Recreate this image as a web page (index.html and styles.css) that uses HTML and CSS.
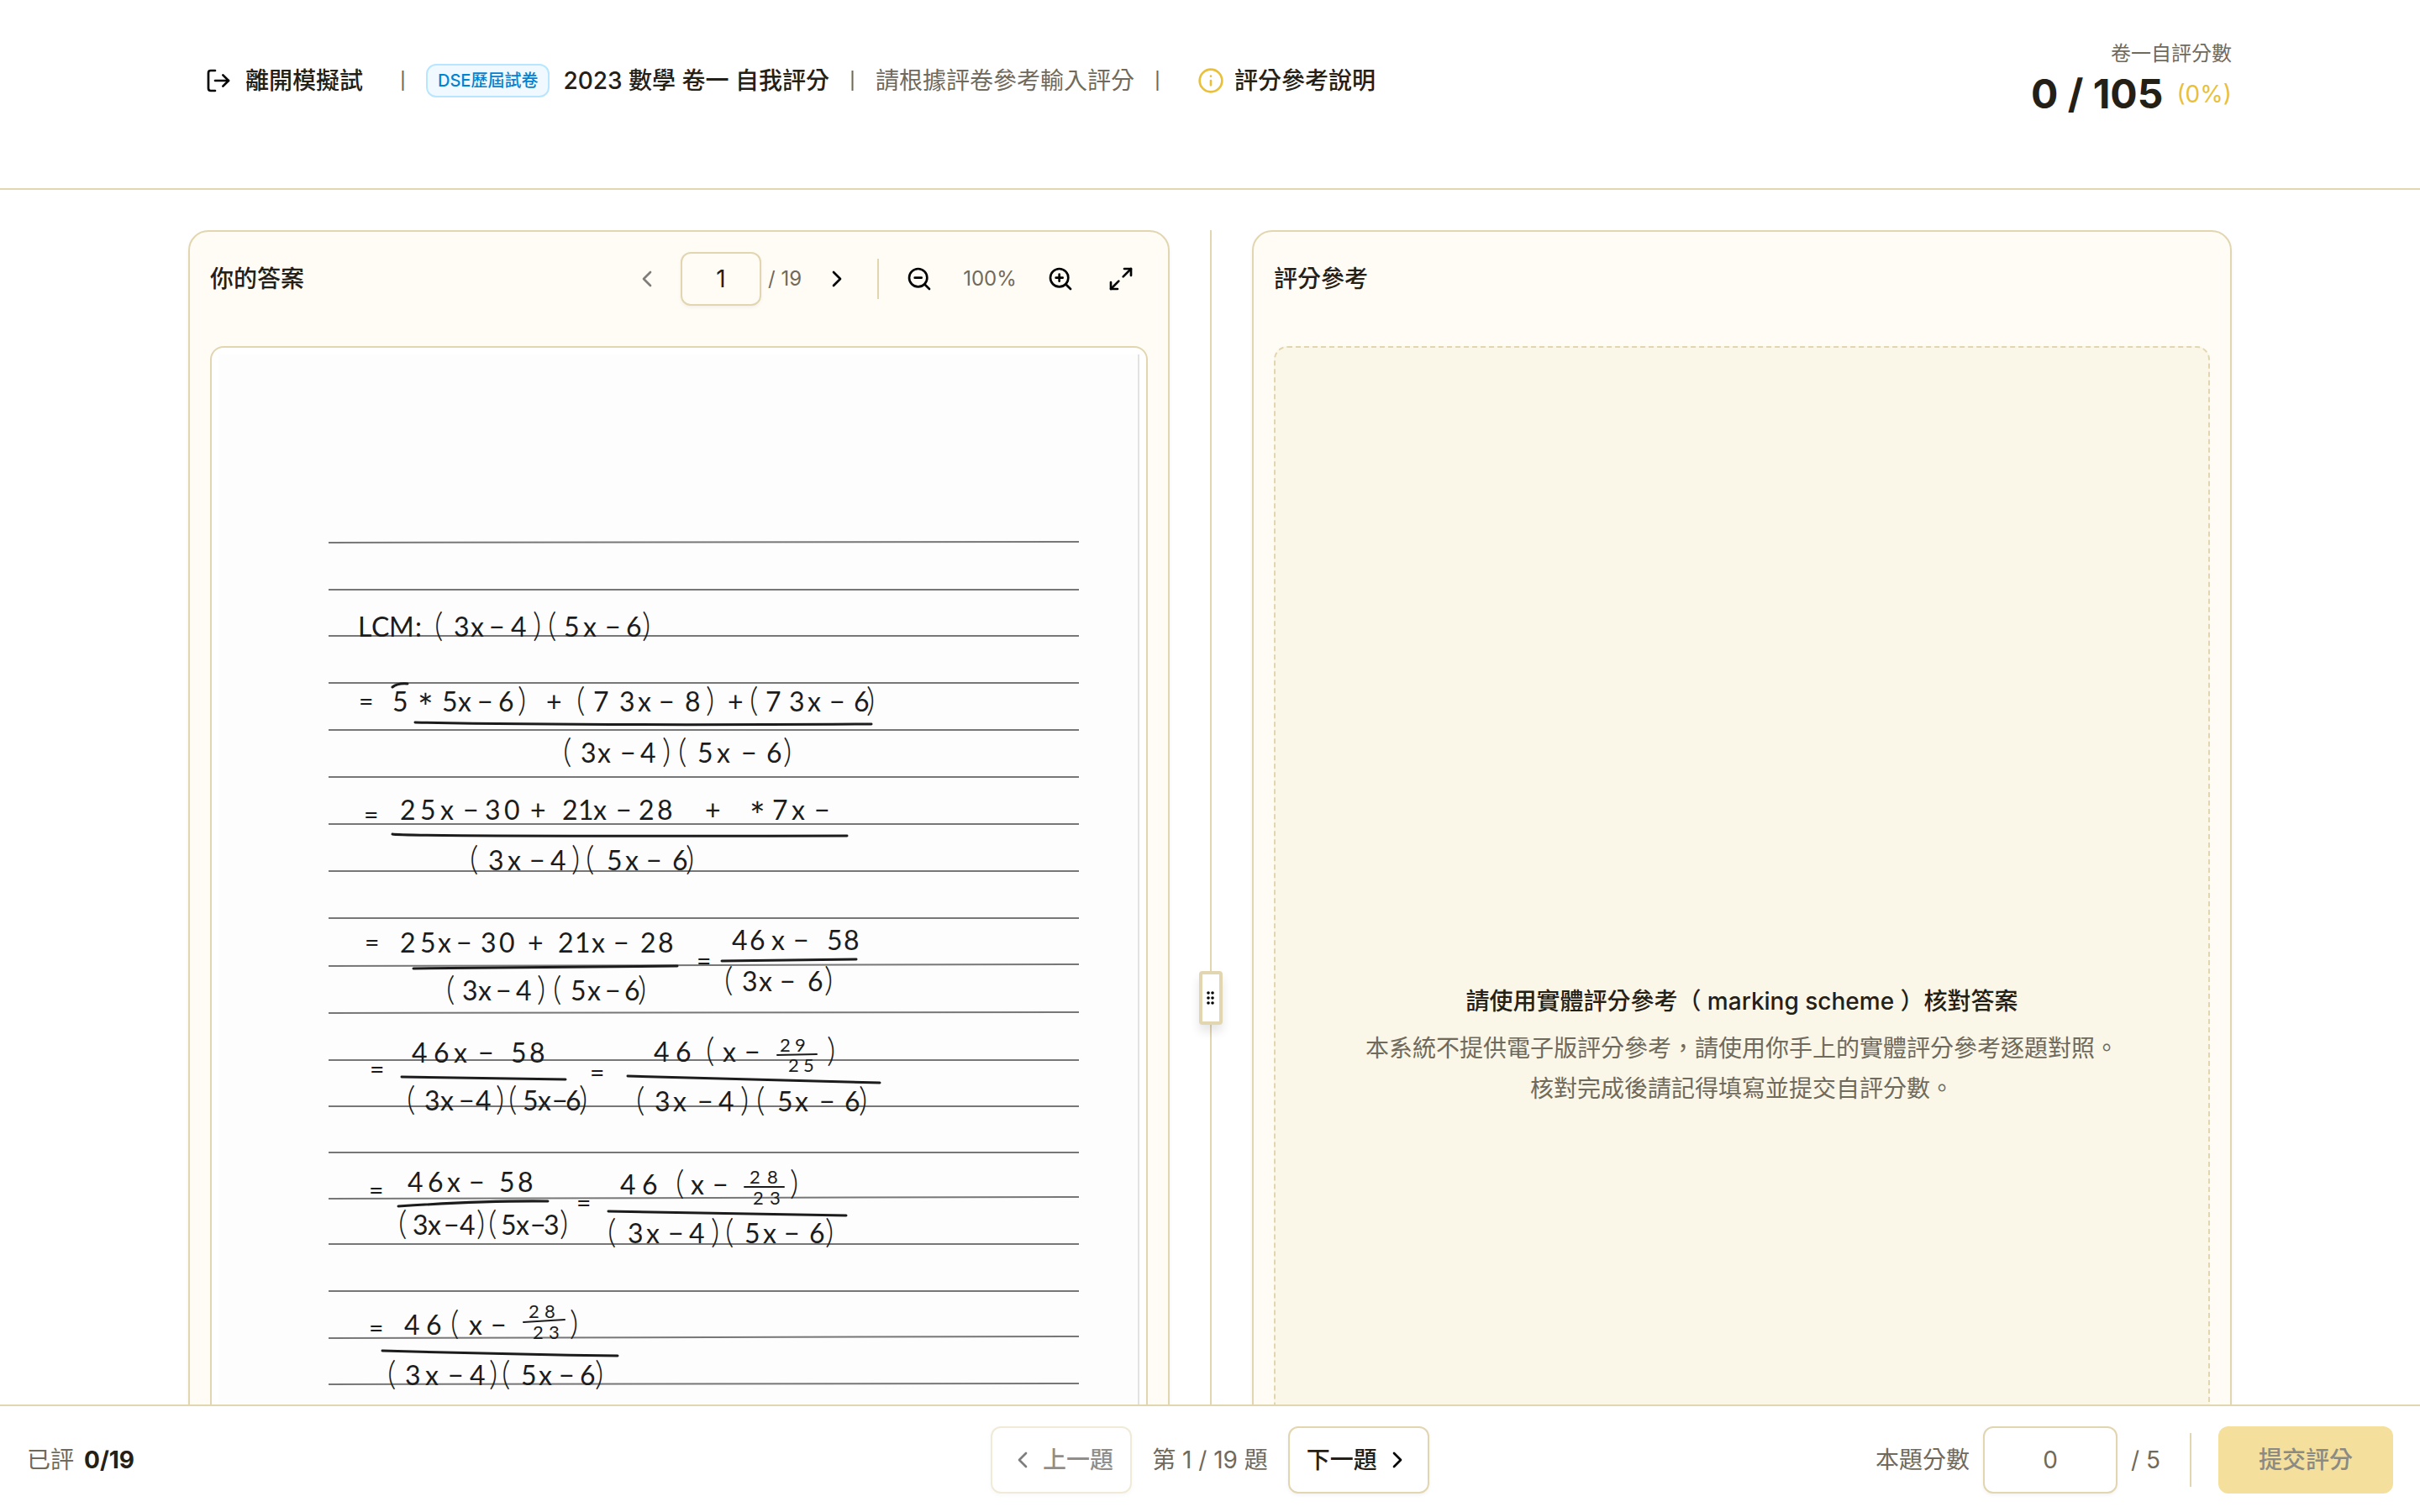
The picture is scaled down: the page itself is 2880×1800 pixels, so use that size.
FILE: index.html
```html
<!DOCTYPE html>
<html lang="zh-Hant">
<head>
<meta charset="utf-8">
<meta name="viewport" content="width=device-width, initial-scale=1">
<title>2023 數學 卷一 自我評分</title>
<link rel="stylesheet" href="styles.css">
</head>
<body>
<div class="app">
  <header class="topbar">
    <div class="topbar-inner">
      <nav class="crumbs">
        <button type="button" class="text-button">
          <svg class="icon" viewBox="0 0 24 24" aria-hidden="true"><path d="m16 17 5-5-5-5"/><path d="M21 12H9"/><path d="M9 21H5a2 2 0 0 1-2-2V5a2 2 0 0 1 2-2h4"/></svg>
          離開模擬試
        </button>
        <span class="bar">|</span>
        <div class="paper-title">
          <span class="badge">DSE歷屆試卷</span>
          <h1>2023 數學 卷一 自我評分</h1>
        </div>
        <span class="bar">|</span>
        <span class="hint">請根據評卷參考輸入評分</span>
        <span class="bar">|</span>
        <button type="button" class="text-button info">
          <svg class="icon icon-gold" viewBox="0 0 24 24" aria-hidden="true"><circle cx="12" cy="12" r="10"/><path d="M12 16v-4"/><path d="M12 8h.01"/></svg>
          評分參考說明
        </button>
      </nav>
      <div class="score">
        <div class="score-label">卷一自評分數</div>
        <div class="score-row"><strong>0 / 105</strong><span class="percent">(0%)</span></div>
      </div>
    </div>
  </header>

  <main class="workspace">
    <section class="panel">
      <div class="panel-head">
        <h2>你的答案</h2>
        <div class="tools">
          <button type="button" class="tool" aria-label="上一頁" disabled><svg class="icon" viewBox="0 0 24 24"><path d="m15 18-6-6 6-6"/></svg></button>
          <input class="page-input" type="text" value="1" aria-label="頁碼">
          <span class="small count">/ 19</span>
          <button type="button" class="tool" aria-label="下一頁"><svg class="icon" viewBox="0 0 24 24"><path d="m9 18 6-6-6-6"/></svg></button>
          <span class="rule"></span>
          <button type="button" class="tool" aria-label="縮小"><svg class="icon" viewBox="0 0 24 24"><circle cx="11" cy="11" r="8"/><path d="m21 21-4.35-4.35M8 11h6"/></svg></button>
          <span class="small zoom">100%</span>
          <button type="button" class="tool" aria-label="放大"><svg class="icon" viewBox="0 0 24 24"><circle cx="11" cy="11" r="8"/><path d="m21 21-4.35-4.35M11 8v6M8 11h6"/></svg></button>
          <button type="button" class="tool" aria-label="全螢幕"><svg class="icon" viewBox="0 0 24 24"><path d="M15 3h6v6"/><path d="m21 3-7 7"/><path d="m3 21 7-7"/><path d="M9 21H3v-6"/></svg></button>
        </div>
      </div>
      <div class="viewer">
        <svg class="paper" viewBox="0 0 1096 1644" role="img" aria-label="第 1 頁答案">
          <path class="edge" d="M1095 0V1644"/>
          <path class="lines" d="M131 224L1024 223M131 280H1024M131 335H1024M131 391H1024M131 447H1024M131 503H1024M131 559H1024M131 615H1024M131 671H1024M131 728L1024 726M131 784L1024 783M131 840H1024M131 895H1024M131 950H1024M131 1005L1024 1003M131 1059H1024M131 1115H1024M131 1171L1024 1169M131 1226L1024 1225M131 1281H1024M131 1336H1024M131 1391H1024M131 1446H1024"/>
          <path class="strokes" d="M207 396q6-5 18-4M234 438Q420 442 777 440M207 571Q220 574 748 573M232 731L546 728M599 722L759 720M218 860L413 863M487 859L787 867M214 1014Q320 1007 392 1008M464 1020L747 1025M195 1186Q330 1190 475 1192"/>
          <path class="strokes thin" d="M665 834L712 833M626 991H673M363 1152L412 1149"/>
          <g class="ink">
            <text x="166 182 203 234 257 280 300 322 348 374 392 411 434 460 485 504" y="336">LCM:<tspan>(</tspan>3x−4<tspan>)(</tspan>5x−6<tspan>)</tspan></text>
            <text x="167" y="424" class="eq">=</text>
            <text x="207" y="425">5</text>
            <text x="237" y="436" class="star">*</text>
            <text x="266 285 308 333 356 390 426 446 477 499 524 555 580 606 632 651 679 701 727 756 771" y="425">5x−6<tspan>)</tspan>+<tspan>(</tspan>73x−8<tspan>)</tspan>+<tspan>(</tspan>73x−6<tspan>)</tspan></text>
            <text x="410 431 451 478 502 528 547 570 593 622 652 672" y="486"><tspan>(</tspan>3x−4<tspan>)(</tspan>5x−6<tspan>)</tspan></text>
            <text x="173" y="559" class="eq">=</text>
            <text x="216 240 264 291 317 340 371 409 428 446 473 500 522 579" y="554">25x−30+21x−28+</text>
            <text x="632" y="565" class="star">*</text>
            <text x="659 682 709" y="554">7x−</text>
            <text x="299 321 344 370 395 420 437 462 484 509 540 556" y="614"><tspan>(</tspan>3x−4<tspan>)(</tspan>5x−6<tspan>)</tspan></text>
            <text x="174" y="711" class="eq">=</text>
            <text x="216 240 261 283 312 334 368 404 424 444 470 502 523" y="712">25x−30+21x−28</text>
            <text x="271 290 309 330 354 379 398 419 439 460 483 499" y="769"><tspan>(</tspan>3x−4<tspan>)(</tspan>5x−6<tspan>)</tspan></text>
            <text x="569" y="733" class="eq">=</text>
            <text x="611 632 658 684 724 744" y="709">46x−58</text>
            <text x="602 623 643 668 701 721" y="758"><tspan>(</tspan>3x−6<tspan>)</tspan></text>
            <text x="180" y="862" class="eq">=</text>
            <text x="230 256 280 309 348 370" y="843">46x−58</text>
            <text x="224 245 264 286 306 330 345 362 380 397 413 429" y="900"><tspan>(</tspan>3x−4<tspan>)(</tspan>5x−6<tspan>)</tspan></text>
            <text x="442" y="866" class="eq">=</text>
            <text x="518 544 580 600 626 724" y="842">46<tspan>(</tspan>x−<tspan>)</tspan></text>
            <text x="668 686" y="830" class="frac">29</text>
            <text x="678 696" y="854" class="frac">25</text>
            <text x="497 519 541 570 595 621 640 665 686 715 745 762" y="901"><tspan>(</tspan>3x−4<tspan>)(</tspan>5x−6<tspan>)</tspan></text>
            <text x="179" y="1006" class="eq">=</text>
            <text x="225 249 272 298 334 356" y="997">46x−58</text>
            <text x="214 231 249 268 287 307 321 336 354 371 387 406" y="1048"><tspan>(</tspan>3x−4<tspan>)(</tspan>5x−3<tspan>)</tspan></text>
            <text x="426" y="1021" class="eq">=</text>
            <text x="478 504 544 562 588 680" y="1000">46<tspan>(</tspan>x−<tspan>)</tspan></text>
            <text x="632 653" y="987" class="frac">28</text>
            <text x="636 656" y="1012" class="frac">23</text>
            <text x="463 487 509 535 560 586 603 626 648 673 703 722" y="1058"><tspan>(</tspan>3x−4<tspan>)(</tspan>5x−6<tspan>)</tspan></text>
            <text x="179" y="1170" class="eq">=</text>
            <text x="221 247 276 298 324 418" y="1167">46<tspan>(</tspan>x−<tspan>)</tspan></text>
            <text x="369 388" y="1147" class="frac">28</text>
            <text x="374 393" y="1172" class="frac">23</text>
            <text x="201 222 246 273 299 322 337 360 381 405 430 448" y="1227"><tspan>(</tspan>3x−4<tspan>)(</tspan>5x−6<tspan>)</tspan></text>
          </g>
        </svg>
      </div>
    </section>

    <div class="splitter">
      <button type="button" class="handle" aria-label="調整欄寬">
        <svg class="grip" viewBox="0 0 10 16" aria-hidden="true"><circle cx="2" cy="2" r="1.8"/><circle cx="7" cy="2" r="1.8"/><circle cx="2" cy="8" r="1.8"/><circle cx="7" cy="8" r="1.8"/><circle cx="2" cy="14" r="1.8"/><circle cx="7" cy="14" r="1.8"/></svg>
      </button>
    </div>

    <section class="panel">
      <div class="panel-head"><h2>評分參考</h2></div>
      <div class="placeholder">
        <p class="placeholder-title">請使用實體評分參考（ marking scheme ）核對答案</p>
        <p>本系統不提供電子版評分參考，請使用你手上的實體評分參考逐題對照。<br>核對完成後請記得填寫並提交自評分數。</p>
      </div>
    </section>
  </main>

  <footer class="bottombar">
    <div class="progress">已評 <strong>0/19</strong></div>
    <div class="pager">
      <button type="button" class="button" disabled><svg class="icon" viewBox="0 0 24 24" aria-hidden="true"><path d="m15 18-6-6 6-6"/></svg>上一題</button>
      <span>第 1 / 19 題</span>
      <button type="button" class="button">下一題<svg class="icon" viewBox="0 0 24 24" aria-hidden="true"><path d="m9 18 6-6-6-6"/></svg></button>
    </div>
    <form class="marks">
      <label for="mark">本題分數</label>
      <input id="mark" class="mark-input" type="text" placeholder="0">
      <span class="total">/ 5</span>
      <span class="rule tall"></span>
      <button type="submit" class="submit" disabled>提交評分</button>
    </form>
  </footer>
</div>
</body>
</html>
```
FILE: styles.css
```css
:root {
  --ink: #252015;
  --muted: #6f6a5c;
  --line: #e2d6b0;
  --cream: #fffcf5;
  --gold: #e9c03a;
}

* { box-sizing: border-box; }

body {
  margin: 0;
  font: 400 28px/48px Inter, "Noto Sans CJK TC", sans-serif;
  color: var(--ink);
  background: #fff;
}

h1, h2, p { margin: 0; font-size: 28px; font-weight: 500; }

button, input {
  font: inherit;
  color: inherit;
  margin: 0;
}

button {
  display: flex;
  align-items: center;
  justify-content: center;
  padding: 0;
  border: 0;
  background: none;
  white-space: nowrap;
}

.app {
  display: flex;
  flex-direction: column;
  height: 100vh;
}

.icon {
  flex: none;
  width: 32px;
  height: 32px;
  fill: none;
  stroke: #000;
  stroke-width: 2;
  stroke-linecap: round;
  stroke-linejoin: round;
}

.icon-gold { stroke: var(--gold); }

/* Header */
.topbar {
  flex: none;
  padding: 48px 224px 80px;
  border-bottom: 2px solid var(--line);
}

.topbar-inner {
  display: flex;
  align-items: center;
  justify-content: space-between;
}

.crumbs {
  display: flex;
  align-items: center;
  gap: 24px;
  white-space: nowrap;
}

.text-button {
  gap: 16px;
  padding: 0 20px;
  font-weight: 500;
}

.info { gap: 12px; }

.bar {
  display: flex;
  justify-content: center;
  width: 7px;
  font-size: 20px;
  font-weight: 500;
  color: var(--muted);
}

.paper-title {
  display: flex;
  align-items: center;
  gap: 16px;
}

.badge {
  padding: 0 12px;
  font-size: 20px;
  font-weight: 500;
  line-height: 36px;
  color: #0084d1;
  background: #f0f9ff;
  border: 2px solid #b8e6fe;
  border-radius: 12px;
}

.hint, .score-label { color: var(--muted); }

.score { text-align: right; }

.score-label {
  font-size: 24px;
  line-height: 32px;
}

.score-row {
  display: flex;
  align-items: center;
  justify-content: flex-end;
  gap: 16px;
  line-height: 64px;
}

.score-row strong { font-size: 48px; font-weight: 700; }

.percent { color: var(--gold); }

/* Panels */
.workspace {
  flex: 1;
  display: grid;
  grid-template-columns: minmax(0, 584fr) 98px minmax(0, 583fr);
  align-content: start;
  min-height: 0;
  padding: 48px 224px;
  overflow-y: auto;
  scrollbar-width: none;
}

.panel {
  display: flex;
  flex-direction: column;
  gap: 48px;
  padding: 24px;
  background: var(--cream);
  border: 2px solid var(--line);
  border-radius: 24px;
  box-shadow: 0 2px 4px rgba(0, 0, 0, .05);
}

.panel-head {
  display: flex;
  align-items: center;
  justify-content: space-between;
  min-height: 64px;
}

.tools {
  display: flex;
  align-items: center;
  gap: 8px;
}

.tool { width: 64px; height: 64px; }

.tool:disabled, .button:disabled { opacity: .5; }

.page-input, .mark-input {
  text-align: center;
  border: 2px solid var(--line);
  border-radius: 12px;
  box-shadow: 0 2px 4px rgba(0, 0, 0, .05);
}

.page-input {
  width: 96px;
  height: 64px;
  background: var(--cream);
}

.small { font-size: 24px; color: var(--muted); }

.count { min-width: 42px; }

.zoom { width: 88px; text-align: center; }

.rule {
  width: 2px;
  height: 48px;
  margin: 0 8px;
  background: var(--line);
}

.viewer {
  padding: 8px;
  background: #fff;
  border: 2px solid var(--line);
  border-radius: 16px;
}

.paper {
  display: block;
  width: 100%;
  height: auto;
  background: #fdfdfd;
}

.edge, .lines, .strokes { fill: none; }
.edge { stroke: #e2e2e2; stroke-width: 2; }
.lines { stroke: #777; stroke-width: 2; }
.strokes { stroke: #1c1c1c; stroke-width: 3; stroke-linecap: round; }
.thin { stroke-width: 2; }

.ink {
  font-family: Lato, sans-serif;
  font-size: 32px;
  fill: #1c1c1c;
}

/* Brackets are written taller than the terms inside them */
.ink tspan { font-size: 40px; font-weight: 300; }

.eq { font-size: 30px; }
.frac { font-size: 22px; }
.star { font-size: 44px; }

.placeholder {
  flex: 1;
  display: flex;
  flex-direction: column;
  align-items: center;
  justify-content: center;
  gap: 8px;
  text-align: center;
  color: var(--muted);
  background: #faf6e8;
  border: 2px dashed var(--line);
  border-radius: 16px;
}

.placeholder p { font-weight: 400; }

.placeholder .placeholder-title { font-weight: 500; color: var(--ink); }

.splitter {
  display: flex;
  align-items: center;
  justify-content: center;
  background: linear-gradient(var(--line), var(--line)) center / 2px 100% no-repeat;
}

.handle {
  width: 28px;
  height: 64px;
  background: #fff;
  border: 4px solid var(--line);
  border-radius: 4px;
  box-shadow: 0 8px 12px rgba(0, 0, 0, .1);
}

.grip { width: 10px; height: 16px; }

/* Footer */
.bottombar {
  flex: none;
  display: grid;
  grid-template-columns: 1fr auto 1fr;
  align-items: center;
  padding: 24px 32px 22px;
  color: var(--muted);
  background: #fff;
  border-top: 2px solid var(--line);
}

.progress {
  display: flex;
  gap: 12px;
}

.progress strong { font-weight: 700; color: var(--ink); }

.pager {
  display: flex;
  align-items: center;
  gap: 24px;
}

.button {
  gap: 8px;
  width: 168px;
  height: 80px;
  font-weight: 500;
  color: var(--ink);
  border: 2px solid var(--line);
  border-radius: 12px;
  box-shadow: 0 2px 4px rgba(0, 0, 0, .05);
}

.marks {
  display: flex;
  align-items: center;
  justify-content: flex-end;
  gap: 16px;
}

.mark-input {
  width: 160px;
  height: 80px;
  background: #fff;
}

.mark-input::placeholder { color: var(--muted); opacity: 1; }

.total { min-width: 38px; }

.tall { height: 64px; margin: 0 16px; }

.submit {
  width: 208px;
  height: 80px;
  font-weight: 500;
  color: #8b8a83;
  background: #f4df9c;
  border-radius: 12px;
}
```
